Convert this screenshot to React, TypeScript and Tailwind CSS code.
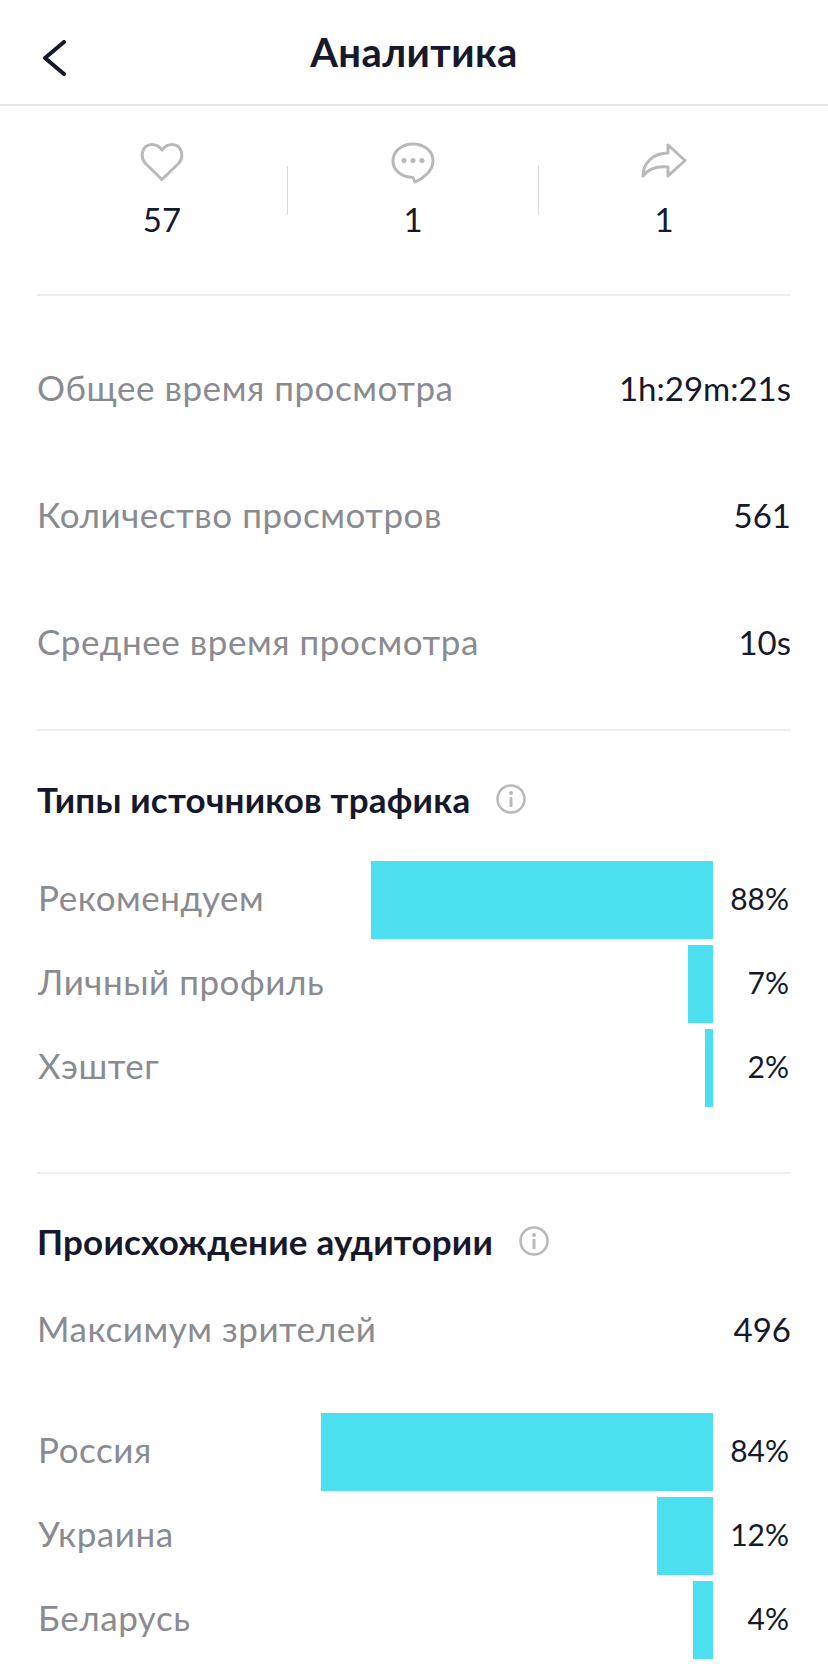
const font = { fontFamily: '"Lato", "Open Sans", "Noto Sans", sans-serif' };

function Heart() {
  return (
    <svg width="44" height="40" viewBox="0 0 44 40" fill="none" stroke="#b9b9bb" strokeWidth="3" strokeLinejoin="round">
      <path d="M22 37.5 L5.5 21.5 C-0.5 15 2 3 11.5 2.5 C16 2.3 19.5 4.5 22 8 C24.5 4.5 28 2.3 32.5 2.5 C42 3 44.5 15 38.5 21.5 Z" />
    </svg>
  );
}

function Comment() {
  return (
    <svg width="44" height="42" viewBox="0 0 44 42" fill="#b9b9bb">
      <path d="M22 2 C10.5 2 2 9.5 2 19 C2 28.500 10.500 35 22 35.500 L24 40 C32 36.500 42 29 42 19 C42 9.500 33.500 2 22 2 Z" fill="none" stroke="#b9b9bb" strokeWidth="3" strokeLinejoin="round" />
      <circle cx="13" cy="18.500" r="2.500" />
      <circle cx="22" cy="18.500" r="2.500" />
      <circle cx="31" cy="18.500" r="2.500" />
    </svg>
  );
}

function Share() {
  return (
    <svg className="mt-[1px]" width="46" height="36" viewBox="0 0 46 36" fill="none" stroke="#b9b9bb" strokeWidth="3" strokeLinejoin="round">
      <path d="M27 2 L44 17.500 L27 33 L27 24 C17 23 8 25 2 33 C2 21 11 10 27 10 Z" />
    </svg>
  );
}

function Info() {
  return (
    <svg width="30" height="30" viewBox="0 0 30 30" fill="none">
      <circle cx="15" cy="15" r="13.500" stroke="#b9b9bb" strokeWidth="2.500" />
      <circle cx="15" cy="9" r="2" fill="#b9b9bb" />
      <rect x="13.500" y="13" width="3" height="10" rx="1" fill="#b9b9bb" />
    </svg>
  );
}

function Stat({ icon, value }: { icon: React.ReactNode; value: string }) {
  return (
    <div className="flex w-[250px] flex-col items-center">
      <div className="flex h-[44px] items-start">{icon}</div>
      <div className="mt-[13px] text-[33px] leading-[40px] text-[#16182b]">{value}</div>
    </div>
  );
}

function Row({ label, value, className }: { label: string; value: string; className: string }) {
  return (
    <div className={`flex items-center justify-between ${className}`}>
      <span className="pb-[4px] text-[35px] tracking-[0.55px] text-[#8a8b91]">{label}</span>
      <span className="text-[33px] text-[#16182b]">{value}</span>
    </div>
  );
}

function Bar({ label, value, width }: { label: string; value: string; width: number }) {
  return (
    <div className="flex h-[78px] items-center">
      <span className="pb-[6px] pl-[1px] text-[35px] tracking-[0.55px] text-[#8a8b91]">{label}</span>
      <div className="ml-auto h-full bg-[#4cdff0]" style={{ width }} />
      <span className="w-[78px] pr-[2px] pb-[4px] text-right text-[30px] text-[#16182b]">{value}</span>
    </div>
  );
}

function Heading({ text }: { text: string }) {
  return (
    <div className="flex items-center gap-[26px]">
      <span className="text-[35px] leading-[40px] font-bold tracking-[0.2px] text-[#16182b]">{text}</span>
      <Info />
    </div>
  );
}

export default function App() {
  return (
    <div className="h-[1664px] w-[828px] overflow-hidden bg-white" style={font}>
      <header className="relative flex h-[106px] items-center justify-center border-b-2 border-[#e6e6e8]">
        <svg className="absolute left-[40px] top-[40px]" width="28" height="36" viewBox="0 0 28 36" fill="none" stroke="#16182b" strokeWidth="4" strokeLinecap="round" strokeLinejoin="round">
          <path d="M24 2 L5 18 L24 34" />
        </svg>
        <h1 className="text-[40px] leading-[44px] font-bold tracking-[0.4px] text-[#16182b]">Аналитика</h1>
      </header>
      <main className="px-[37px]">
        <div className="flex h-[190px] items-start border-b-2 border-[#eeeeef] pt-[36px]">
          <Stat icon={<Heart />} value="57" />
          <div className="mt-[24px] h-[49px] w-[1px] bg-[#d9d9db]" />
          <Stat icon={<Comment />} value="1" />
          <div className="mt-[24px] h-[49px] w-[1px] bg-[#d9d9db]" />
          <Stat icon={<Share />} value="1" />
        </div>
        <div className="flex h-[435px] flex-col border-b-2 border-[#eeeeef] pt-[63px]">
          <Row label="Общее время просмотра" value="1h:29m:21s" className="h-[60px]" />
          <Row label="Количество просмотров" value="561" className="mt-[67px] h-[60px]" />
          <Row label="Среднее время просмотра" value="10s" className="mt-[67px] h-[60px]" />
        </div>
        <div className="h-[443px] border-b-2 border-[#eeeeef] pt-[48px]">
          <Heading text="Типы источников трафика" />
          <div className="mt-[42px] flex flex-col gap-[6px]">
            <Bar label="Рекомендуем" value="88%" width={342} />
            <Bar label="Личный профиль" value="7%" width={25} />
            <Bar label="Хэштег" value="2%" width={8} />
          </div>
        </div>
        <div className="pt-[47px]">
          <Heading text="Происхождение аудитории" />
          <Row label="Максимум зрителей" value="496" className="mt-[39px] h-[60px]" />
          <div className="mt-[53px] flex flex-col gap-[6px]">
            <Bar label="Россия" value="84%" width={392} />
            <Bar label="Украина" value="12%" width={56} />
            <Bar label="Беларусь" value="4%" width={20} />
          </div>
        </div>
      </main>
    </div>
  );
}
